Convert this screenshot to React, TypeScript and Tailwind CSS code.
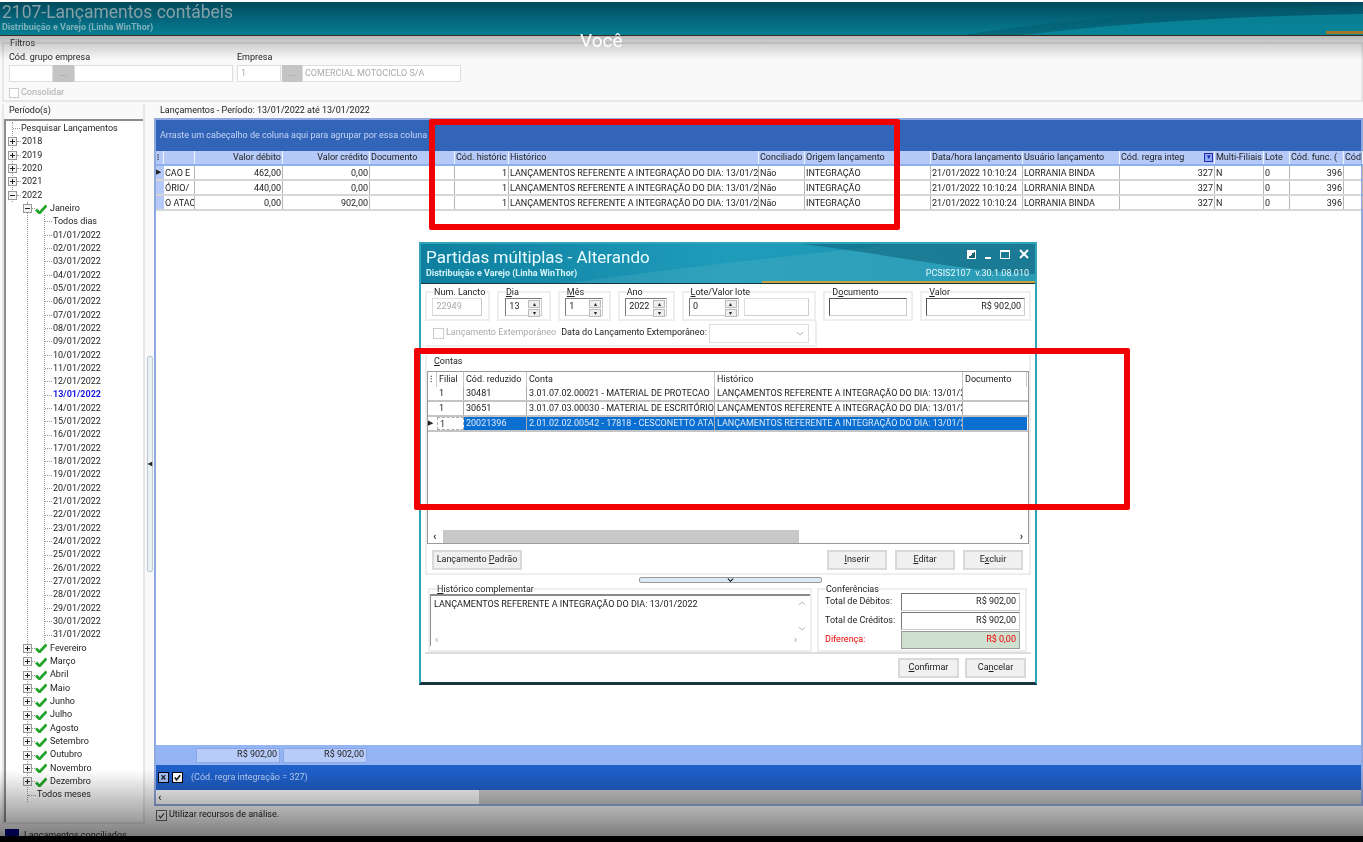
import React from 'react';

const days = Array.from({ length: 31 }, (_, i) => String(i + 1).padStart(2, '0') + '/01/2022');
const months = ['Fevereiro', 'Março', 'Abril', 'Maio', 'Junho', 'Julho', 'Agosto', 'Setembro', 'Outubro', 'Novembro', 'Dezembro'];
const hist = 'LANÇAMENTOS REFERENTE A INTEGRAÇÃO DO DIA: 13/01/2022';

const Plus = ({ open = false }: { open?: boolean }) => (
  <span className="relative flex h-[9px] w-[9px] shrink-0 items-center justify-center border border-[#9a9a9a] bg-[#f4f4f4]">
    <span className="h-px w-[5px] bg-[#222]" />
    {!open && <span className="absolute h-[5px] w-px bg-[#222]" />}
  </span>
);

const Check = () => (
  <svg viewBox="0 0 12 10" className="h-[10px] w-[12px] shrink-0">
    <path d="M1 5.5 L4.5 9 L11.5 1.5" fill="none" stroke="#22a52a" strokeWidth="2.8" />
  </svg>
);

const Row = ({ children }: { children: React.ReactNode }) => (
  <div className="flex h-[13.33px] items-center whitespace-nowrap">{children}</div>
);

const Dash = ({ w }: { w: string }) => <span className={`${w} shrink-0 border-t border-dotted border-[#999]`} />;

const Tree = () => (
  <div className="relative h-full overflow-hidden border-l-2 border-t-2 border-[#8c8c8c] bg-white pt-px text-[#222]">
    <div className="ml-[6px] border-l border-dotted border-[#999]">
      <Row><Dash w="w-[7px]" /><span className="ml-[1px]">Pesquisar Lançamentos</span></Row>
      {['2018', '2019', '2020', '2021'].map((y) => (
        <Row key={y}><span className="-ml-[5px]"><Plus /></span><Dash w="w-[4px]" /><span className="ml-[1px]">{y}</span></Row>
      ))}
      <Row><span className="-ml-[5px]"><Plus open /></span><Dash w="w-[4px]" /><span className="ml-[1px]">2022</span></Row>
    </div>
    <div className="ml-[21px] border-l border-dotted border-[#999]">
      <Row><span className="-ml-[5px]"><Plus open /></span><Dash w="w-[3px]" /><Check /><span className="ml-[3px]">Janeiro</span></Row>
      <div className="ml-[16px] border-l border-dotted border-[#999]">
        <Row><Dash w="w-[7px]" /><span className="ml-[1px]">Todos dias</span></Row>
        {days.map((d) => (
          <Row key={d}><Dash w="w-[7px]" /><span className={d === '13/01/2022' ? 'ml-[1px] font-bold text-[#1a1ae0]' : 'ml-[1px]'}>{d}</span></Row>
        ))}
      </div>
      {months.map((m) => (
        <Row key={m}><span className="-ml-[5px]"><Plus /></span><Dash w="w-[3px]" /><Check /><span className="ml-[3px]">{m}</span></Row>
      ))}
      <Row><Dash w="w-[8px]" /><span className="ml-[1px]">Todos meses</span></Row>
    </div>
  </div>
);

const headers = [
  ['', 'l'], ['', 'l'], ['Valor débito', 'r'], ['Valor crédito', 'r'], ['Documento', 'l'], ['Cód. históric', 'l'], ['Histórico', 'l'], ['Conciliado', 'l'],
  ['Origem lançamento', 'l'], ['Data/hora lançamento', 'l'], ['Usuário lançamento', 'l'], ['Cód. regra integ', 'l'], ['Multi-Filiais', 'l'], ['Lote', 'l'], ['Cód. func. (', 'l'], ['Cód', 'l'],
];

const rows = [
  ['CAO E', '462,00', '0,00'],
  ['ÓRIO/', '440,00', '0,00'],
  ['O ATAC', '0,00', '902,00'],
];

const gridCols = 'grid grid-cols-[8px_31px_88px_87px_85px_54px_250px_46px_126px_92px_97px_95px_49px_26px_54px_19px]';

const Cell = ({ children, right = false }: { children?: React.ReactNode; right?: boolean }) => (
  <div className={`overflow-hidden whitespace-nowrap border-r border-[#b5b5b5] px-[1px] leading-[14px] ${right ? 'text-right' : ''}`}>{children}</div>
);

const MainGrid = () => (
  <div className="flex min-h-0 flex-1 flex-col border-2 border-[#8fa8e0] bg-white text-[#222]">
    <div className="flex h-[31px] shrink-0 items-center bg-[#3264b8] pl-[4px] text-[#c5d6f5]">Arraste um cabeçalho de coluna aqui para agrupar por essa coluna</div>
    <div className={`${gridCols} h-[15px] shrink-0 border-b-2 border-[#8fb0ee] bg-[#b4c9f8]`}>
      {headers.map(([h, a], i) => (
        <div key={i} className={`flex items-center overflow-hidden whitespace-nowrap border-r border-[#f0f4ff] px-[1px] leading-[13px] ${a === 'r' ? 'justify-end' : ''}`}>
          {i === 0 && <span className="text-[8px] font-bold leading-none">⁝</span>}
          {i === 11 && <span className="flex-1 overflow-hidden">{h}</span>}
          {i !== 0 && i !== 11 && h}
          {i === 11 && <span className="ml-auto flex h-[9px] w-[9px] shrink-0 items-center justify-center border border-[#2a2ab0] bg-[#8aa8f0] text-[7px] text-[#1a1ab0]">▾</span>}
        </div>
      ))}
    </div>
    {rows.map((r, i) => (
      <div key={i} className={`${gridCols} h-[15px] shrink-0 border-b-2 border-[#d6d6d6]`}>
        <div className="flex items-center bg-[#b4c9f8] text-[7px] leading-none">{i === 0 ? '▶' : ''}</div>
        <Cell>{r[0]}</Cell>
        <Cell right>{r[1]}</Cell>
        <Cell right>{r[2]}</Cell>
        <Cell />
        <Cell right>1</Cell>
        <Cell>{hist}</Cell>
        <Cell>Não</Cell>
        <Cell>INTEGRAÇÃO</Cell>
        <Cell>21/01/2022 10:10:24</Cell>
        <Cell>LORRANIA BINDA</Cell>
        <Cell right>327</Cell>
        <Cell>N</Cell>
        <Cell>0</Cell>
        <Cell right>396</Cell>
        <Cell />
      </div>
    ))}
    <div className="flex-1" />
    <div className="flex h-[20px] shrink-0 items-center bg-[#94b4f4] pl-[40px]">
      <div className="flex h-[15px] w-[84px] items-center justify-end border border-[#86a6e6] bg-[#b8ccfa] pr-[2px]">R$ 902,00</div>
      <div className="ml-[3px] flex h-[15px] w-[84px] items-center justify-end border border-[#86a6e6] bg-[#b8ccfa] pr-[2px]">R$ 902,00</div>
    </div>
    <div className="flex h-[25px] shrink-0 items-center bg-[#1f5fc8] pl-[2px] text-[#b9cff5]">
      <span className="flex h-[11px] w-[11px] items-center justify-center border border-black bg-[#a9c3f5] text-[10px] font-bold leading-none text-[#111]">×</span>
      <span className="ml-[3px] flex h-[11px] w-[11px] items-center justify-center border border-black bg-white">
        <svg viewBox="0 0 10 10" className="h-[9px] w-[9px]"><path d="M2 5 L4 7.5 L8 2.5" fill="none" stroke="#111" strokeWidth="1.6" /></svg>
      </span>
      <span className="ml-[8px]">(Cód. regra integração = 327)</span>
    </div>
    <div className="flex h-[14px] shrink-0 bg-[#c8c8c8]">
      <div className="flex h-full w-[323px] items-center bg-[#fafafa] pl-[2px] text-[11px] font-bold leading-none text-[#333]">‹</div>
    </div>
  </div>
);

const Legend = ({ label, className, children }: { label: React.ReactNode; className: string; children?: React.ReactNode }) => (
  <fieldset className={`border-2 border-[#eeeeee] ${className}`}>
    <legend className="ml-[7px] whitespace-nowrap px-0 leading-[10px] text-[#222]">{label}</legend>
    {children}
  </fieldset>
);

const Input = ({ className, children }: { className: string; children?: React.ReactNode }) => (
  <div className={`flex items-center overflow-hidden border border-[#7a7a7a] border-b-[#ccc] border-r-[#ccc] bg-white px-[3px] text-[#222] ${className}`}>{children}</div>
);

const Spin = () => (
  <div className="flex h-[15px] w-[12px] shrink-0 flex-col gap-px text-[6px] leading-none text-[#222]">
    <span className="flex flex-1 items-center justify-center border border-[#bbb] bg-[#eee]">▴</span>
    <span className="flex flex-1 items-center justify-center border border-[#bbb] bg-[#eee]">▾</span>
  </div>
);

const Spinner = ({ label, value, className, inputW }: { label: React.ReactNode; value: string; className: string; inputW: string }) => (
  <Legend label={label} className={className}>
    <div className={`mx-auto mt-[1px] flex h-[18px] ${inputW} items-center border border-[#7a7a7a] border-b-[#ccc] border-r-[#ccc] bg-white pl-[3px] pr-[1px] text-[#222]`}>
      <span className="flex-1">{value}</span>
      <Spin />
    </div>
  </Legend>
);

const Btn = ({ children, className }: { children: React.ReactNode; className: string }) => (
  <button className={`h-[20px] border-2 border-[#d9d9d9] bg-[#f0f0f0] text-[#222] ${className}`}>{children}</button>
);

const modalCols = 'grid grid-cols-[9px_27px_63px_188px_248px_64px]';

const Modal = () => (
  <div className="absolute left-[419px] top-[242px] flex h-[443px] w-[618px] flex-col border-2 border-b-[3px] border-[#2fa4bb] border-b-[#16353d] bg-white text-[9px]">
    <div className="relative flex h-[39px] shrink-0 items-start justify-between bg-gradient-to-r from-[#0e7f9f] via-[#1f9cba] to-[#1a93af] pl-[5px] pr-[6px]">
      <svg viewBox="0 0 614 39" preserveAspectRatio="none" className="absolute inset-0 h-full w-full">
        <path d="M150 39 C 300 18 400 10 470 0 L 614 0 L 614 39 Z" fill="#ffffff" opacity="0.08" />
        <path d="M380 0 C 470 10 530 26 614 30 L 614 0 Z" fill="#0a5a72" opacity="0.5" />
      </svg>
      <div className="relative text-[#eafcff]">
        <div className="pt-[3px] text-[17px] leading-[21px]">Partidas múltiplas - Alterando</div>
        <div className="text-[9px] font-bold leading-[11px] text-[#d3f2f7]">Distribuição e Varejo (Linha WinThor)</div>
      </div>
      <div className="relative flex flex-col items-end text-[#e9f9fc]">
        <div className="flex h-[20px] items-center gap-[9px]">
          <span className="h-[9px] w-[9px] border border-white bg-gradient-to-br from-white from-50% to-[#16606f] to-50%" />
          <span className="mt-[8px] h-[2px] w-[6px] bg-white" />
          <span className="h-[9px] w-[10px] border border-t-2 border-white" />
          <svg viewBox="0 0 10 10" className="h-[10px] w-[10px]"><path d="M1 1 L9 9 M9 1 L1 9" stroke="#fff" strokeWidth="2" /></svg>
        </div>
        <div className="mt-[4px] text-[9px] leading-[11px]">PCSIS2107 &nbsp;v.30.1.08.010</div>
      </div>
      <div className="absolute bottom-0 right-0 h-[2px] w-[273px] bg-[#c7a43c]" />
    </div>
    <div className="flex min-h-0 flex-1 flex-col border-t border-[#16353d] px-[4px]">
      <div className="flex h-[37px] shrink-0 gap-[7px] pt-[3px]">
        <Legend label="Num. Lancto" className="w-[65px]">
          <Input className="mx-auto mt-[1px] h-[18px] w-[50px] border-[#dddddd] text-[#aaa]"><span className="text-[#aaa]">22949</span></Input>
        </Legend>
        <Spinner label={<><u>D</u>ia</>} value="13" className="w-[54px]" inputW="w-[37px]" />
        <Spinner label={<><u>M</u>ês</>} value="1" className="w-[53px]" inputW="w-[38px]" />
        <Spinner label="Ano" value="2022" className="w-[57px]" inputW="w-[42px]" />
        <Legend label={<><u>L</u>ote/Valor lote</>} className="w-[135px]">
          <div className="mx-auto mt-[1px] flex w-[120px] gap-[5px]">
            <div className="flex h-[18px] w-[50px] items-center border border-[#7a7a7a] border-b-[#ccc] border-r-[#ccc] pl-[3px] pr-px text-[#222]"><span className="flex-1">0</span><Spin /></div>
            <Input className="h-[18px] w-[65px] border-[#ddd]" />
          </div>
        </Legend>
        <Legend label={<>D<u>o</u>cumento</>} className="w-[90px]">
          <Input className="mx-auto mt-[1px] h-[18px] w-[78px] border-[#555]" />
        </Legend>
        <Legend label={<><u>V</u>alor</>} className="w-[111px]">
          <Input className="mx-auto mt-[1px] h-[18px] w-[99px] justify-end border-[#555]">R$ 902,00</Input>
        </Legend>
      </div>
      <div className="flex h-[26px] w-[392px] shrink-0 items-center whitespace-nowrap border-b-2 border-r-2 border-[#eeeeee] pl-[8px]">
        <span className="h-[11px] w-[11px] shrink-0 border border-[#ccc]" />
        <span className="ml-[2px] text-[#aaa]">Lançamento Extemporâneo</span>
        <span className="ml-[5px] text-[#222]">Data do Lançamento Extemporâneo:</span>
        <div className="ml-[2px] flex h-[19px] w-[100px] shrink-0 items-center justify-end border border-[#ddd] pr-[4px] text-[#999]">
          <svg viewBox="0 0 10 6" className="h-[5px] w-[8px]"><path d="M1 1 L5 5 L9 1" fill="none" stroke="#999" /></svg>
        </div>
      </div>
      <div className="mt-[5px] flex h-[194px] shrink-0 flex-col border-x-2 border-[#eeeeee]">
        <div className="h-[19px] shrink-0 pl-[7px] leading-[19px] text-[#222]"><u>C</u>ontas</div>
        <div className="flex h-[173px] flex-col border border-[#9a9a9a] bg-white text-[#222]">
          <div className={`${modalCols} h-[15px] shrink-0`}>
            {['⁝', 'Filial', 'Cód. reduzido', 'Conta', 'Histórico', 'Documento'].map((h, i) => (
              <div key={i} className="overflow-hidden whitespace-nowrap border-r border-[#c8c8c8] px-[2px] leading-[15px]">{h}</div>
            ))}
          </div>
          {[
            ['1', '30481', '3.01.07.02.00021 - MATERIAL DE PROTECAO'],
            ['1', '30651', '3.01.07.03.00030 - MATERIAL DE ESCRITÓRIO'],
            ['1', '20021396', '2.01.02.02.00542 - 17818 - CESCONETTO ATACADO'],
          ].map((r, i) => {
            const sel = i === 2;
            return (
              <div key={i} className={`${modalCols} h-[15px] shrink-0 border-b-2 border-[#c4c4c4] leading-[13px]`}>
                <div className="flex items-center text-[7px] leading-none">{sel ? '▶' : ''}</div>
                <div className={`overflow-hidden border-r border-[#aaa] px-[2px] ${sel ? 'border border-dashed border-[#333]' : ''}`}>{r[0]}</div>
                <div className={`overflow-hidden border-r border-[#aaa] px-[2px] ${sel ? 'bg-[#0a6fd0] text-[#dbe9fa]' : ''}`}>{r[1]}</div>
                <div className={`overflow-hidden whitespace-nowrap border-r border-[#aaa] px-[2px] ${sel ? 'bg-[#0a6fd0] text-[#dbe9fa]' : ''}`}>{r[2]}</div>
                <div className={`overflow-hidden whitespace-nowrap border-r border-[#aaa] px-[2px] ${sel ? 'bg-[#0a6fd0] text-[#dbe9fa]' : ''}`}>{hist}</div>
                <div className={sel ? 'bg-[#0a6fd0]' : ''} />
              </div>
            );
          })}
          <div className="flex-1" />
          <div className="flex h-[14px] shrink-0 items-center text-[11px] font-bold leading-none text-[#333]">
            <span className="w-[15px] pl-[5px]">‹</span>
            <span className="h-[13px] w-[356px] bg-[#c8c8c8]" />
            <span className="ml-auto pr-[5px]">›</span>
          </div>
        </div>
      </div>
      <div className="flex h-[29px] shrink-0 items-center justify-between border-x-2 border-b-2 border-[#eeeeee] pl-[5px] pr-[6px]">
        <Btn className="w-[90px]">Lançamento <u>P</u>adrão</Btn>
        <div className="flex gap-[8px]">
          <Btn className="w-[60px]"><u>I</u>nserir</Btn>
          <Btn className="w-[60px]"><u>E</u>ditar</Btn>
          <Btn className="w-[60px]">E<u>x</u>cluir</Btn>
        </div>
      </div>
      <div className="flex h-[9px] shrink-0 items-center justify-center">
        <div className="ml-[5px] flex h-[6px] w-[183px] items-center justify-center rounded-[2px] border border-[#9a9a9a] bg-[#dbe9f5]">
          <svg viewBox="0 0 8 4" className="h-[4px] w-[7px]"><path d="M1 0.5 L4 3.5 L7 0.5" fill="none" stroke="#111" strokeWidth="1.2" /></svg>
        </div>
      </div>
      <div className="flex h-[70px] shrink-0 gap-[5px] border-b-2 border-[#dddddd]">
        <Legend label={<><u>H</u>istórico complementar</>} className="ml-[3px] w-[384px]">
          <div className="flex h-[52px] flex-col border-l border-t-2 border-[#8a8a8a] text-[#222]">
            <div className="flex flex-1 justify-between pl-[3px] pr-[4px] pt-[3px] leading-[11px]">
              <span>{hist}</span>
              <span className="flex flex-col justify-between pb-[1px] pt-[2px] text-[#aaa]">
                <svg viewBox="0 0 10 6" className="h-[5px] w-[8px]"><path d="M1 5 L5 1 L9 5" fill="none" stroke="#aaa" /></svg>
                <svg viewBox="0 0 10 6" className="h-[5px] w-[8px]"><path d="M1 1 L5 5 L9 1" fill="none" stroke="#aaa" /></svg>
              </span>
            </div>
            <div className="flex h-[14px] w-[366px] items-center justify-between pl-[4px] text-[11px] leading-none text-[#aaa]"><span>‹</span><span>›</span></div>
          </div>
        </Legend>
        <Legend label="Conferências" className="w-[210px]">
          <div className="-mt-px flex flex-col gap-px pl-[6px] pr-[5px] text-[#222]">
            <div className="flex items-center justify-between">Total de Débitos:<Input className="h-[18px] w-[119px] justify-end border-[#777]">R$ 902,00</Input></div>
            <div className="flex items-center justify-between">Total de Créditos:<Input className="h-[18px] w-[119px] justify-end border-[#777]">R$ 902,00</Input></div>
            <div className="flex items-center justify-between text-[#f00000]">Diferença:<div className="flex h-[18px] w-[119px] items-center justify-end border border-[#999] bg-[#cfe0cf] px-[3px]">R$ 0,00</div></div>
          </div>
        </Legend>
      </div>
      <div className="flex flex-1 items-center justify-end gap-[6px] pr-[5px]">
        <Btn className="w-[61px]"><u>C</u>onfirmar</Btn>
        <Btn className="w-[61px]">Ca<u>n</u>celar</Btn>
      </div>
    </div>
  </div>
);

export default function App() {
  return (
    <div className="relative flex h-[842px] w-[1363px] flex-col overflow-hidden bg-[#f9f9f9] font-['Roboto',sans-serif] text-[9px] text-[#222] blur-[0.4px]">
      <div className="relative flex h-[36px] shrink-0 flex-col overflow-hidden border-t-2 border-b border-t-white border-b-[#3a2a20] bg-gradient-to-b from-[#024a5c] via-[#05647a] to-[#067f92] pl-[2px]">
        <svg viewBox="0 0 400 33" preserveAspectRatio="none" className="absolute right-0 top-0 h-full w-[400px]">
          <path d="M0 33 C 120 14 240 8 400 4 L 400 0 L 400 33 Z" fill="#035a6e" opacity="0.5" />
          <path d="M60 33 C 170 20 280 14 400 12 L 400 33 Z" fill="#0a8ea3" opacity="0.7" />
        </svg>
        <div className="relative text-[17.5px] leading-[20px] text-[#86a0a8]">2107-Lançamentos contábeis</div>
        <div className="relative text-[9px] font-bold leading-[10px] text-[#7fb0bb]">Distribuição e Varejo (Linha WinThor)</div>
        <div className="absolute bottom-[1px] right-0 h-[3px] w-[37px] bg-[#a5772a]" />
      </div>
      <div className="flex h-[68px] shrink-0 flex-col pl-[2px] pt-[2px]">
        <fieldset className="h-[64px] border-2 border-[#e6e6e6] pl-[5px]">
          <legend className="ml-px leading-[10px] text-[#333]">Filtros</legend>
          <div className="mt-[3px] flex gap-[4px]">
            <div className="w-[224px]">
              <div className="leading-[12px]">Cód. grupo empresa</div>
              <div className="mt-[2px] flex h-[17px]">
                <div className="w-[44px] border border-[#ddd] bg-white" />
                <div className="flex w-[21px] items-center justify-center bg-[#c4c4c4] text-[#888]">...</div>
                <div className="flex-1 border border-[#ddd] bg-white" />
              </div>
            </div>
            <div className="w-[224px]">
              <div className="leading-[12px]">Empresa</div>
              <div className="mt-[2px] flex h-[17px] text-[#aaa]">
                <div className="flex w-[44px] items-center border border-[#ddd] bg-white pl-[3px]">1</div>
                <div className="ml-px flex w-[20px] items-center justify-center bg-[#c4c4c4] text-[#888]">...</div>
                <div className="flex flex-1 items-center whitespace-nowrap border border-[#ddd] bg-white pl-[2px]">COMERCIAL MOTOCICLO S/A</div>
              </div>
            </div>
          </div>
          <div className="mt-[4px] flex items-center text-[#aaa]">
            <span className="h-[10px] w-[10px] border border-[#ccc] bg-white" />
            <span className="ml-[2px]">Consolidar</span>
          </div>
        </fieldset>
      </div>
      <div className="flex min-h-0 flex-1">
        <div className="ml-[2px] flex w-[143px] shrink-0 flex-col border-x-2 border-b-2 border-[#e6e6e6]">
          <div className="h-[15px] shrink-0 pl-[5px] leading-[12px]">Período(s)</div>
          <div className="min-h-0 flex-1"><Tree /></div>
        </div>
        <div className="flex w-[9px] shrink-0 flex-col items-center justify-center text-[8px] font-bold text-[#222]">
          <div className="flex h-[216px] w-[6px] items-center justify-center rounded-[2px] border border-[#bcc8d8] bg-[#eaf2f4]">◂</div>
        </div>
        <div className="flex min-w-0 flex-1 flex-col">
          <div className="h-[14px] shrink-0 pl-[6px] leading-[12px]">Lançamentos - Período: 13/01/2022 até 13/01/2022</div>
          <MainGrid />
          <div className="flex h-[18px] shrink-0 items-center pl-[2px]">
            <span className="flex h-[11px] w-[11px] items-center justify-center border border-[#666] bg-white">
              <svg viewBox="0 0 10 10" className="h-[9px] w-[9px]"><path d="M2 5 L4 7.5 L8 2.5" fill="none" stroke="#333" strokeWidth="1.3" /></svg>
            </span>
            <span className="ml-[2px]">Utilizar recursos de análise.</span>
          </div>
        </div>
      </div>
      <div className="flex h-[12px] shrink-0 items-start overflow-hidden pl-[5px] pt-[5px]">
        <span className="h-[10px] w-[14px] shrink-0 bg-[#00008b]" />
        <span className="ml-[5px] leading-[12px]">Lançamentos conciliados</span>
      </div>
      <div className="h-[6px] shrink-0 bg-black" />
      <Modal />
      <div className="pointer-events-none absolute left-0 top-[36px] h-[24px] w-[1363px] bg-gradient-to-b from-black/25 to-transparent" />
      <div className="pointer-events-none absolute left-0 top-[770px] h-[66px] w-[1363px] bg-gradient-to-b from-transparent to-black/50" />
      <div className="absolute left-[580px] top-[29px] text-[19px] leading-[24px] text-white">Você</div>
      <div className="absolute left-[429px] top-[119px] h-[111px] w-[471px] rounded-[2px] border-[6px] border-[#f00000]" />
      <div className="absolute left-[414px] top-[348px] h-[162px] w-[716px] rounded-[2px] border-[6px] border-[#f00000]" />
    </div>
  );
}
